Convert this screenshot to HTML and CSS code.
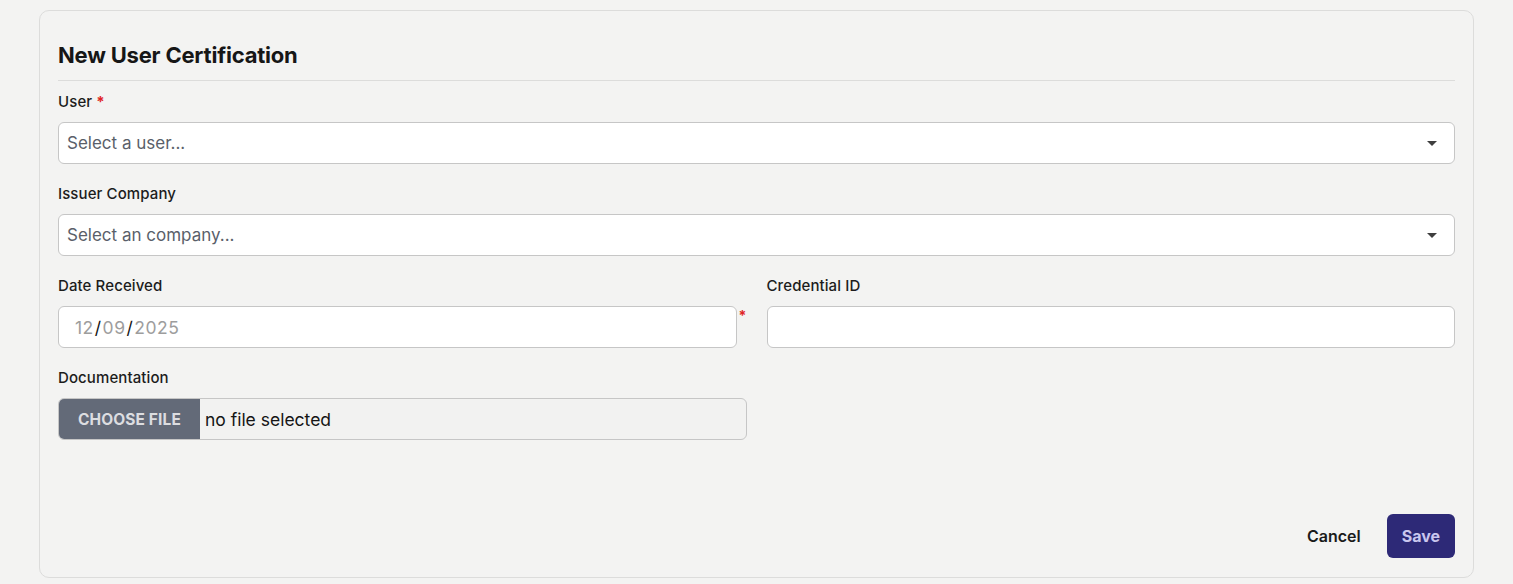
FILE: index.html
```html
<!DOCTYPE html>
<html lang="en">
<head>
  <meta charset="UTF-8">
  <meta name="viewport" content="width=device-width, initial-scale=1.0">
  <title>New User Certification</title>
  <link rel="stylesheet" href="styles.css">
</head>
<body>

  <form class="card">
    <h2 class="card-title">New User Certification</h2>

    <!-- User -->
    <div class="field">
      <label class="field-label">User <span class="req">*</span></label>
      <div class="select-box">
        <span class="placeholder">Select a user...</span>
        <span class="caret"></span>
      </div>
    </div>

    <!-- Issuer company -->
    <div class="field">
      <label class="field-label">Issuer Company</label>
      <div class="select-box">
        <span class="placeholder">Select an company...</span>
        <span class="caret"></span>
      </div>
    </div>

    <div class="field-row">
      <div class="field">
        <label class="field-label">Date Received</label>
        <div class="date-wrap">
          <div class="text-input date-input">
            <span class="dim">12</span><span class="sep">/</span><span class="dim">09</span><span class="sep">/</span><span class="dim">2025</span>
          </div>
          <span class="req side">*</span>
        </div>
      </div>
      <div class="field">
        <label class="field-label">Credential ID</label>
        <div class="text-input"></div>
      </div>
    </div>

    <div class="field-row">
      <div class="field">
        <label class="field-label">Documentation</label>
        <div class="file-input">
          <span class="file-button">Choose File</span>
          <span class="file-name">no file selected</span>
        </div>
      </div>
    </div>

    <div class="card-actions">
      <button type="button" class="btn-link">Cancel</button>
      <button type="button" class="btn-primary">Save</button>
    </div>
  </form>

</body>
</html>
```

FILE: styles.css
```css
body {
  margin: 0;
  background: #f3f3f2;
  font-family: Inter, "Noto Sans", sans-serif;
  color: #1a1a1a;
}

.card {
  margin: 10px 39px 6px;
  padding: 29px 18px 19px;
  border: 1px solid #dcdcdb;
  border-radius: 10px;
  background: #f3f3f2;
}

.card-title {
  margin: 0 0 11px;
  padding-bottom: 10px;
  border-bottom: 1px solid #dcdcdb;
  font-size: 22px;
  line-height: 30px;
  font-weight: 700;
  letter-spacing: -0.2px;
  color: #161616;
}

/* Form fields */
.field {
  margin-bottom: 20px;
}
.field-label {
  display: block;
  margin-bottom: 10px;
  font-size: 15px;
  line-height: 20px;
  font-weight: 500;
  letter-spacing: 0.1px;
  color: #1c1c1c;
}
.req {
  color: #e02424;
  font-weight: 700;
}

.select-box,
.text-input {
  box-sizing: border-box;
  height: 42px;
  display: flex;
  align-items: center;
  background: #fff;
  border: 1px solid #c6c6c6;
  border-radius: 6px;
  padding: 0 8px;
}
.placeholder {
  flex: 1;
  font-size: 17px;
  color: #5a5f6a;
}
.caret {
  width: 0;
  height: 0;
  margin-right: 9px;
  border-left: 5px solid transparent;
  border-right: 5px solid transparent;
  border-top: 5px solid #3f3f3f;
}

/* Two column rows */
.field-row {
  display: grid;
  grid-template-columns: 1fr 1fr;
  column-gap: 20px;
}

.date-wrap {
  display: flex;
  align-items: flex-start;
}
.date-wrap .text-input {
  flex: 1;
}
.date-input {
  padding-left: 16px;
  font-size: 17.5px;
  letter-spacing: 0.5px;
  color: #111;
}
.date-input .dim {
  color: #9d9d9d;
}
.date-input .sep {
  padding: 0 1px;
}
.req.side {
  width: 8px;
  margin-left: 2px;
  margin-top: 3px;
  font-size: 14px;
  line-height: 14px;
}

/* File picker */
.file-input {
  box-sizing: border-box;
  height: 42px;
  display: flex;
  align-items: stretch;
  border: 1px solid #c6c6c6;
  border-radius: 6px;
  overflow: hidden;
  background: #f2f2f1;
}
.file-button {
  display: flex;
  align-items: center;
  padding: 0 19px;
  background: #636a78;
  color: #dcdde0;
  font-size: 15.5px;
  font-weight: 700;
  text-transform: uppercase;
  letter-spacing: 0.1px;
}
.file-name {
  display: flex;
  align-items: center;
  padding-left: 5px;
  font-size: 17.5px;
  color: #151515;
}

/* Footer buttons */
.card-actions {
  display: flex;
  justify-content: flex-end;
  align-items: center;
  gap: 26px;
  margin-top: 54px;
}
.btn-link {
  border: none;
  background: none;
  padding: 0;
  font-family: inherit;
  font-size: 16px;
  font-weight: 600;
  color: #1a1a1a;
  cursor: pointer;
}
.btn-primary {
  height: 44px;
  padding: 0 15px;
  border: none;
  border-radius: 6px;
  background: #2d2977;
  color: #c9c6ee;
  font-family: inherit;
  font-size: 16px;
  font-weight: 700;
  cursor: pointer;
}
```
